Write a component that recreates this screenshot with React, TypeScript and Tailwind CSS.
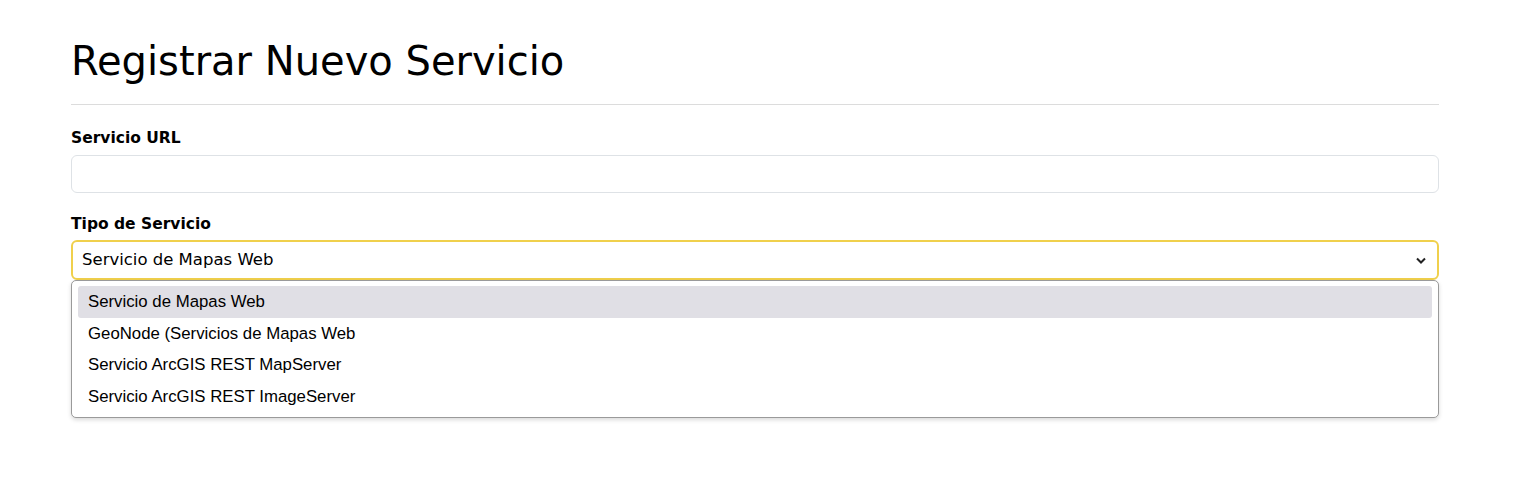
import React from "react";

const options = [
  "Servicio de Mapas Web",
  "GeoNode (Servicios de Mapas Web",
  "Servicio ArcGIS REST MapServer",
  "Servicio ArcGIS REST ImageServer",
];

export default function App() {
  return (
    <div className="min-h-[481px] bg-white text-black" style={{ fontFamily: "'DejaVu Sans', 'Noto Sans', sans-serif" }}>
      <div className="pl-[71px] pr-[90px] pt-[34px]">
        <h1 className="text-[40px] leading-[54px] font-normal text-black">Registrar Nuevo Servicio</h1>
        <hr className="mt-[16px] border-0 border-t border-[#dcdcdc]" />
        <div className="mt-[22px]">
          <label className="block text-[15.5px] leading-[22px] font-bold">Servicio URL</label>
          <div className="mt-[6px] h-[38px] rounded-[6px] border border-[#dee2e6] bg-white" />
        </div>
        <div className="mt-[20px] relative">
          <label className="block text-[15.5px] leading-[22px] font-bold">Tipo de Servicio</label>
          <div className="mt-[5px] h-[40px] rounded-[6px] border-2 border-[#f0d04c] bg-white flex items-center justify-between pl-[9px] pr-[11px]">
            <span className="text-[16.5px]">Servicio de Mapas Web</span>
            <svg width="10" height="7" viewBox="0 0 10 7" fill="none">
              <path d="M1 1.5 L5 5.5 L9 1.5" stroke="#222" strokeWidth="2" />
            </svg>
          </div>
          <div className="absolute left-0 right-0 top-[100%] h-[138px] rounded-[5px] border border-[#9a9a9a] bg-white shadow-[0_2px_4px_rgba(0,0,0,0.15)] px-[6px] pt-[5px]" style={{ fontFamily: "'Liberation Sans', Arial, sans-serif" }}>
            {options.map((o, i) => (
              <div
                key={o}
                className={`h-[31.5px] flex items-center pl-[10px] text-[16.8px] rounded-[3px] ${i === 0 ? "bg-[#e0dfe5]" : ""}`}
              >
                {o}
              </div>
            ))}
          </div>
        </div>
      </div>
    </div>
  );
}
